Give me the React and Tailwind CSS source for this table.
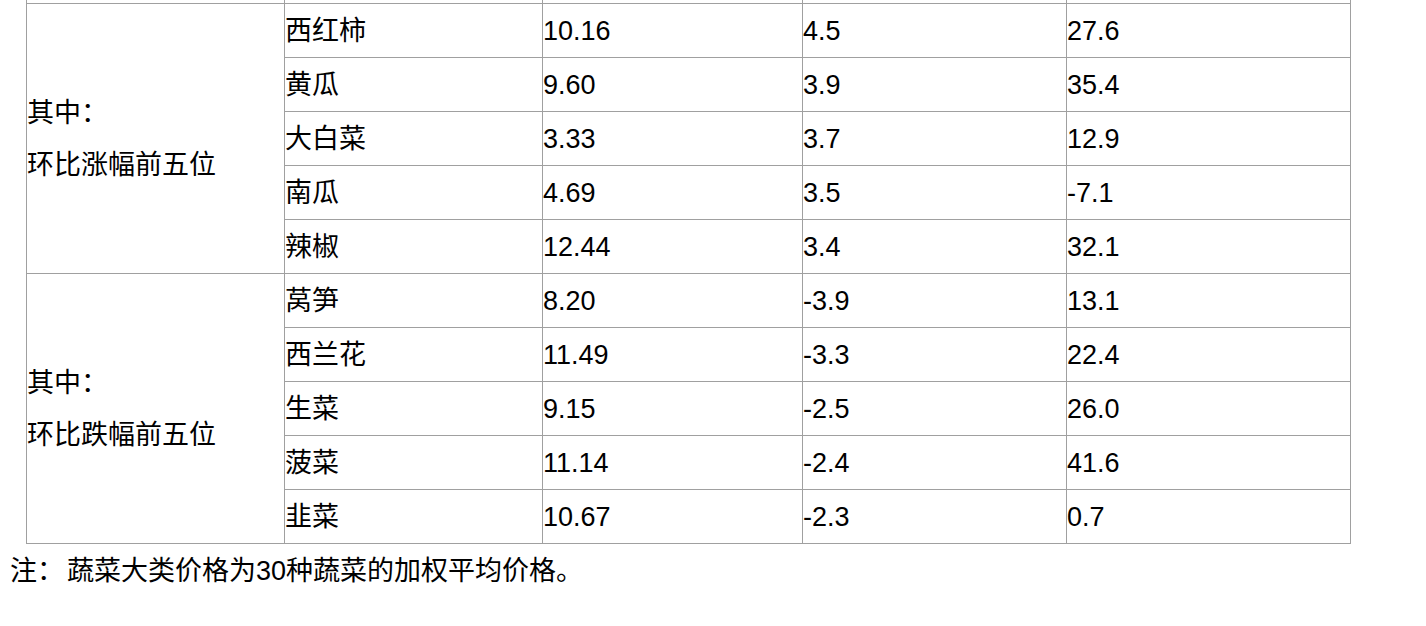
import React from 'react';

const riseRows = [
  ['西红柿', '10.16', '4.5', '27.6'],
  ['黄瓜', '9.60', '3.9', '35.4'],
  ['大白菜', '3.33', '3.7', '12.9'],
  ['南瓜', '4.69', '3.5', '-7.1'],
  ['辣椒', '12.44', '3.4', '32.1'],
];

const fallRows = [
  ['莴笋', '8.20', '-3.9', '13.1'],
  ['西兰花', '11.49', '-3.3', '22.4'],
  ['生菜', '9.15', '-2.5', '26.0'],
  ['菠菜', '11.14', '-2.4', '41.6'],
  ['韭菜', '10.67', '-2.3', '0.7'],
];

const cell = 'border border-[#a0a0a0] p-0 pt-px align-middle text-left';

const Group = ({ rows, label }) => (
  <>
    {rows.map((r, i) => (
      <tr key={r[0]} className="h-[54px]">
        {i === 0 && (
          <td rowSpan={rows.length} className={cell}>
            <div>其中：</div>
            <div>{label}</div>
          </td>
        )}
        {r.map((v, j) => (
          <td key={j} className={cell}>
            {v}
          </td>
        ))}
      </tr>
    ))}
  </>
);

export default function App() {
  return (
    <div
      className="w-[1426px] h-[626px] overflow-hidden bg-white text-black text-[27px] leading-[52px]"
      style={{ fontFamily: '"Liberation Sans", Arial, "Noto Sans CJK SC", sans-serif' }}
    >
      <div className="pl-[26px]">
        <table className="border-collapse table-fixed w-[1324px] -mt-[51px]">
          <colgroup>
            <col className="w-[258px]" />
            <col className="w-[258px]" />
            <col className="w-[260px]" />
            <col className="w-[264px]" />
            <col className="w-[284px]" />
          </colgroup>
          <tbody>
            <tr className="h-[54px]">
              <td className={cell}></td>
              <td className={cell}></td>
              <td className={cell}></td>
              <td className={cell}></td>
              <td className={cell}></td>
            </tr>
            <Group rows={riseRows} label="环比涨幅前五位" />
            <Group rows={fallRows} label="环比跌幅前五位" />
          </tbody>
        </table>
      </div>
      <p className="pl-[10px] leading-[54px]">
        注：<span className="ml-[3px]">蔬菜大类价格为30种蔬菜的加权平均价格。</span>
      </p>
    </div>
  );
}
